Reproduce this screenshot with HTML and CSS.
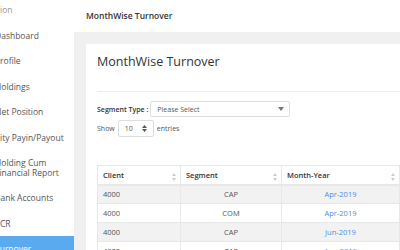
FILE: index.html
```html
<!DOCTYPE html>
<html lang="en">
<head>
  <meta charset="UTF-8" />
  <meta name="viewport" content="width=device-width, initial-scale=1" />
  <title>MonthWise Turnover</title>
  <link rel="stylesheet" href="styles.css">
</head>
<body>

  <div class="layout">
    <aside class="sidebar">
      <ul class="menu">
        <li class="menu-title">ion</li>
        <li>Dashboard</li>
        <li>Profile</li>
        <li>Holdings</li>
        <li>Net Position</li>
        <li class="indent">ity Payin/Payout</li>
        <li>Holding Cum<br>Financial Report</li>
        <li>Bank Accounts</li>
        <li class="indent">CR</li>
        <li class="active">Turnover</li>
      </ul>
    </aside>

    <main class="main">
      <header class="topbar">MonthWise Turnover</header>

      <div class="content">
        <div class="card">
          <h2 class="card-title">MonthWise Turnover</h2>

          <div class="filters">
            <div class="filter-row">
              <label class="filter-label">Segment Type :</label>
              <div class="select wide">
                <span>Please Select</span>
                <svg width="6" height="4" viewBox="0 0 6 4"><path d="M0 0h6L3 4z" fill="#777"/></svg>
              </div>
            </div>
            <div class="filter-row">
              <span class="muted">Show</span>
              <div class="select small">
                <span>10</span>
                <svg width="5" height="7" viewBox="0 0 5 7"><path d="M0 3L2.5 0 5 3zM0 4h5L2.5 7z" fill="#555"/></svg>
              </div>
              <span class="muted">entries</span>
            </div>
          </div>

          <table class="grid">
            <thead>
              <tr>
                <th class="col-client">Client <svg class="sort" width="4" height="8" viewBox="0 0 4 8"><path d="M0 3L2 0 4 3zM0 5h4L2 8z" fill="#ccc"/></svg></th>
                <th class="col-segment">Segment <svg class="sort" width="4" height="8" viewBox="0 0 4 8"><path d="M0 3L2 0 4 3zM0 5h4L2 8z" fill="#ccc"/></svg></th>
                <th class="col-month">Month-Year <svg class="sort" width="4" height="8" viewBox="0 0 4 8"><path d="M0 3L2 0 4 3zM0 5h4L2 8z" fill="#ccc"/></svg></th>
                <th class="col-extra"></th>
              </tr>
            </thead>
            <tbody>
              <tr>
                <td>4000</td>
                <td class="center">CAP</td>
                <td class="center link">Apr-2019</td>
                <td></td>
              </tr>
              <tr>
                <td>4000</td>
                <td class="center">COM</td>
                <td class="center link">Apr-2019</td>
                <td></td>
              </tr>
              <tr>
                <td>4000</td>
                <td class="center">CAP</td>
                <td class="center link">Jun-2019</td>
                <td></td>
              </tr>
              <tr>
                <td>4000</td>
                <td class="center">CAP</td>
                <td class="center link">Aug-2019</td>
                <td></td>
              </tr>
            </tbody>
          </table>
        </div>
      </div>
    </main>
  </div>

</body>
</html>
```

FILE: styles.css
```css
body {
  margin: 0;
  font-family: "Open Sans", Arial, sans-serif;
  color: #333;
  background: #f0f0f0;
  overflow: hidden;
}

.layout {
  display: flex;
  width: 400px;
  height: 250px;
  overflow: hidden;
}

.sidebar {
  width: 74px;
  flex-shrink: 0;
  background: #fff;
  overflow: hidden;
}

.menu {
  list-style: none;
  margin: -3px 0 0 -5px;
  padding: 0;
}

.menu li {
  padding: 8px 0;
  font-size: 8.5px;
  line-height: 9.5px;
  color: #555;
  white-space: nowrap;
}

.menu .menu-title {
  color: #999;
  padding-left: 5px;
}

.menu .indent {
  padding-left: 5px;
}

.menu .active {
  background: #5aaaf0;
  color: #fff;
}

.main {
  flex: 1;
  min-width: 0;
}

.topbar {
  height: 32px;
  background: #fff;
  padding-left: 12px;
  font-size: 8.5px;
  font-weight: 600;
  line-height: 32px;
  color: #333;
  white-space: nowrap;
}

.content {
  padding: 12px 0 0 12px;
}

.card {
  background: #fff;
  padding: 9px 0 0 11px;
  width: 400px;
}

.card-title {
  margin: 0;
  font-size: 12.5px;
  font-weight: 400;
  color: #333;
  line-height: 17px;
  padding-bottom: 21px;
  border-bottom: 1px solid #eee;
}

.filters {
  padding-top: 9px;
  display: flex;
  flex-direction: column;
  gap: 3px;
}

.filter-row {
  display: flex;
  align-items: center;
  gap: 3px;
  font-size: 7px;
}

.filter-label {
  font-weight: 600;
  font-size: 7px;
  color: #333;
  margin-right: -1px;
}

.muted {
  color: #555;
}

.select {
  display: flex;
  align-items: center;
  justify-content: space-between;
  border: 1px solid #ddd;
  border-radius: 2px;
  box-sizing: border-box;
  color: #555;
  font-size: 7px;
}

.select.wide {
  width: 140px;
  height: 16px;
  padding: 0 5px 0 6px;
}

.select.small {
  width: 36px;
  height: 17px;
  padding: 0 6px;
}

.grid {
  margin-top: 28px;
  border-collapse: collapse;
  font-size: 7.5px;
  table-layout: fixed;
  width: 340px;
}

.grid th, .grid td {
  border: 1px solid #e8e8e8;
  height: 19px;
  padding: 0 5px;
  box-sizing: border-box;
  text-align: left;
  white-space: nowrap;
}

.grid th {
  position: relative;
  font-weight: 600;
  color: #333;
  border-bottom: 2px solid #e8e8e8;
}

.grid td {
  color: #555;
}

.col-client { width: 83px; }
.col-segment { width: 101px; }
.col-month { width: 118px; }
.col-extra { width: 38px; }

.sort {
  position: absolute;
  right: 4px;
  bottom: 3px;
}

.grid tbody tr:nth-child(odd) {
  background: #f2f2f2;
}

.center {
  text-align: center !important;
}

.link {
  color: #4a90e2 !important;
}
```
